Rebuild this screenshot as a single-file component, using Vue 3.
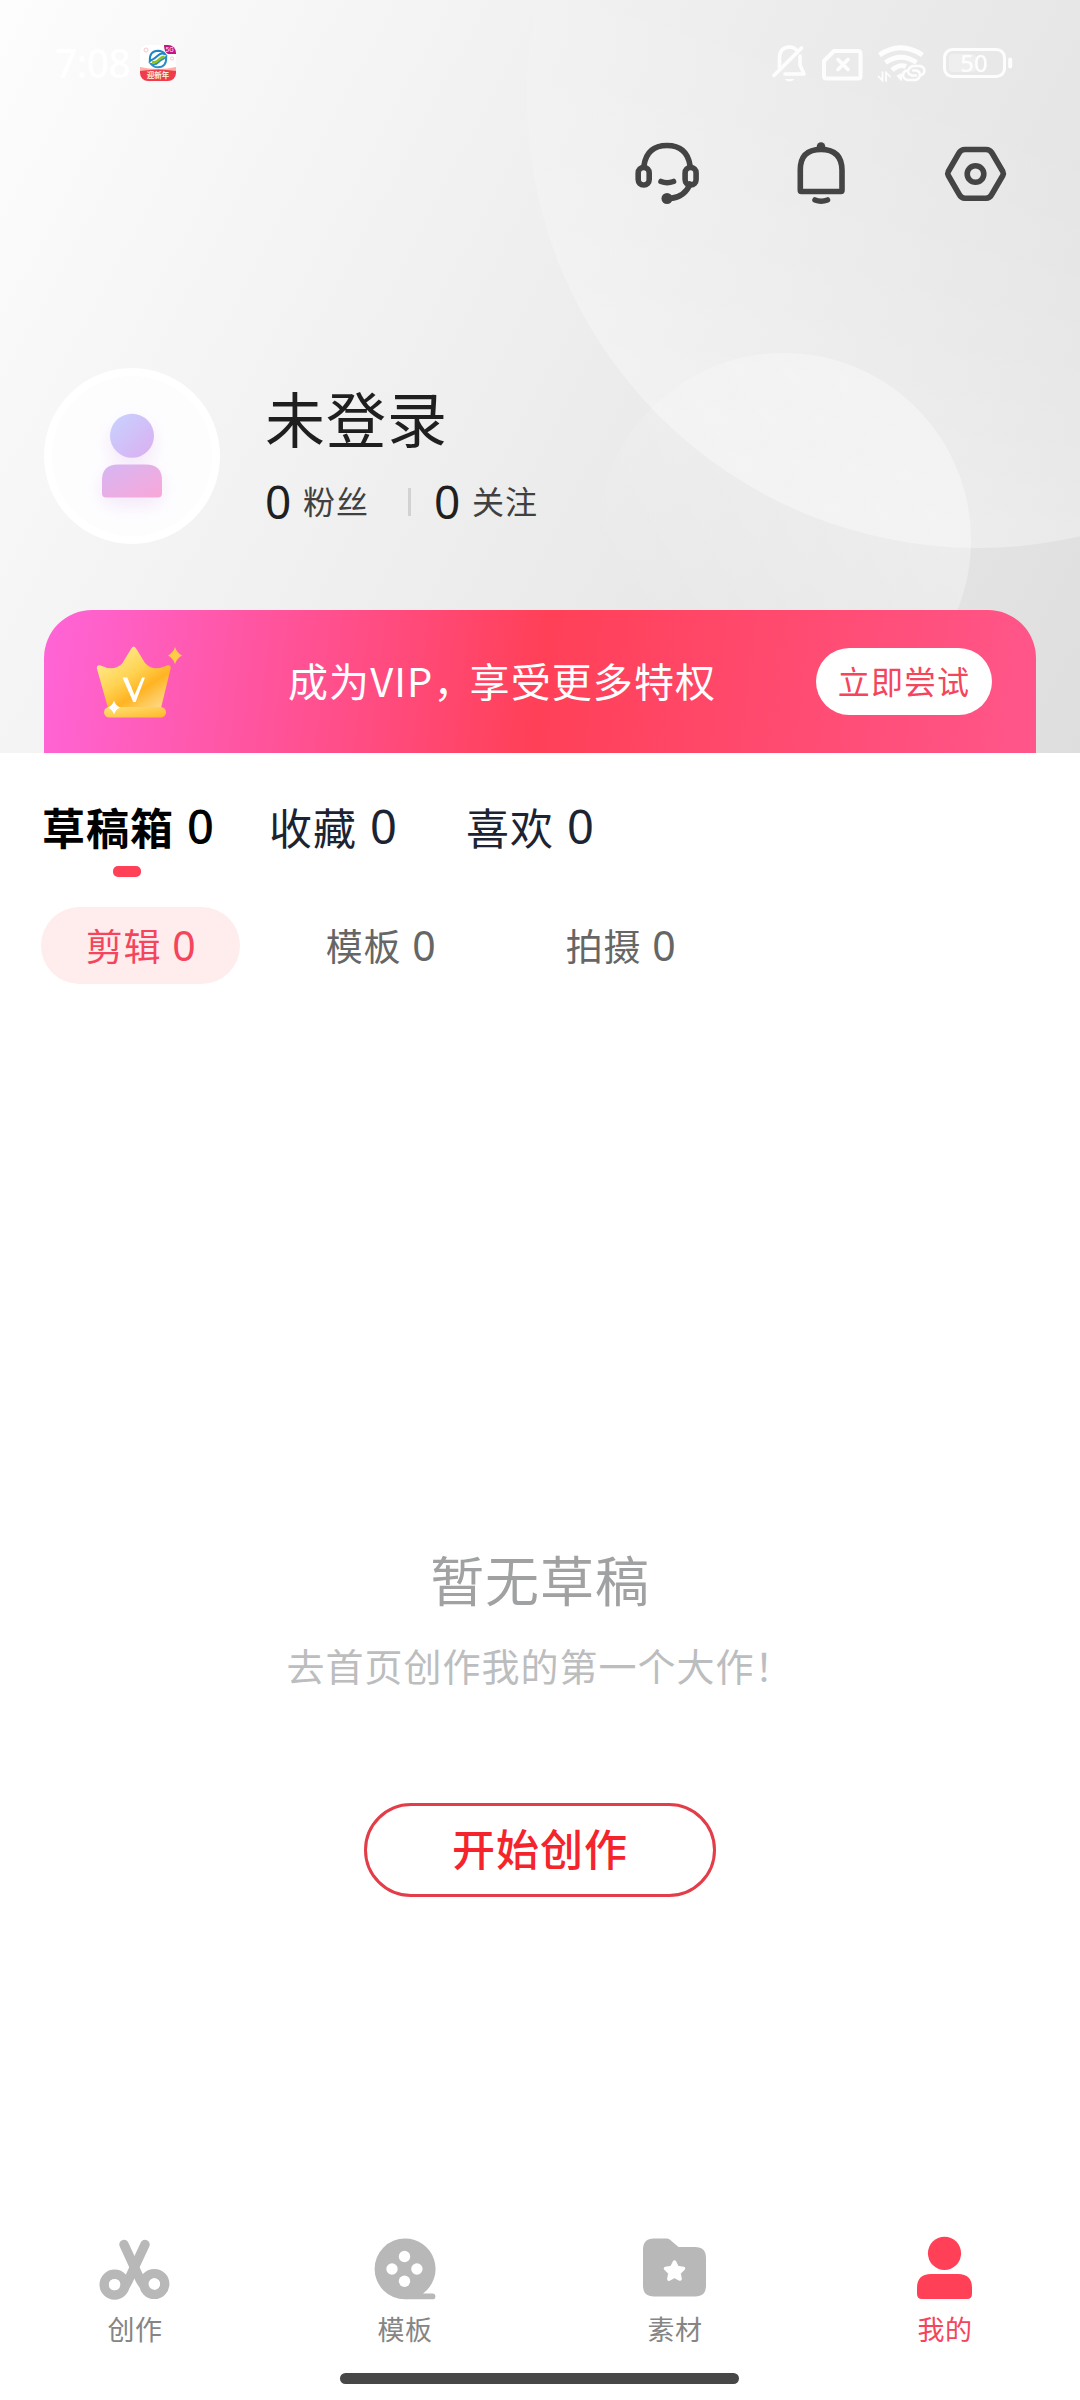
<script setup>
const tabs = [
  { name: '草稿箱', count: 0 },
  { name: '收藏', count: 0 },
  { name: '喜欢', count: 0 },
]
const filters = [
  { name: '剪辑', count: 0 },
  { name: '模板', count: 0 },
  { name: '拍摄', count: 0 },
]
const navItems = [
  { id: 'create', label: '创作' },
  { id: 'template', label: '模板' },
  { id: 'material', label: '素材' },
  { id: 'mine', label: '我的' },
]
</script>

<template>
  <div class="screen">
    <header class="hero">
      <svg class="hero-bg" viewBox="0 0 1080 753" preserveAspectRatio="none">
        <defs>
          <linearGradient id="big" gradientUnits="userSpaceOnUse" x1="690" y1="500" x2="860" y2="60">
            <stop offset="0" stop-color="#fff" stop-opacity=".4" />
            <stop offset=".5" stop-color="#fff" stop-opacity=".18" />
            <stop offset="1" stop-color="#fff" stop-opacity="0" />
          </linearGradient>
          <linearGradient id="small" gradientUnits="userSpaceOnUse" x1="900" y1="420" x2="640" y2="590">
            <stop offset="0" stop-color="#fff" stop-opacity=".36" />
            <stop offset="1" stop-color="#fff" stop-opacity="0.02" />
          </linearGradient>
        </defs>
        <circle cx="978" cy="97" r="451" fill="url(#big)" />
        <circle cx="784" cy="540" r="187" fill="url(#small)" />
      </svg>

      <div class="status">
        <span class="time">7:08</span>
        <svg class="app-badge" viewBox="0 0 36 36">
          <defs><clipPath id="badge"><rect width="36" height="36" rx="8" /></clipPath></defs>
          <g clip-path="url(#badge)">
            <rect width="36" height="36" fill="#fff" />
            <path d="M24 0h12v9h-8q-4-2-4-9z" fill="#c5137f" />
            <text x="25.5" y="7" font-size="6" fill="#fff" font-family="Inter, sans-serif">5G</text>
            <path d="M0 22q18 4 36 0v4H0z" fill="#ffb0a8" />
            <path d="M0 26q18-3 36 0v10H0z" fill="#f13b4c" />
            <g fill="none" stroke-width="2">
              <path d="M9.800 16q-.5-10 8.200-10.300q4.500 0 7 3.300q-4-1.500-7 1.500t-8.200 5.500z" stroke="#1c86c7" />
              <path d="M26.200 12q.5 10-8.200 10.300q-4.500 0-7-3.300q4 1.500 7-1.500t8.200-5.500z" stroke="#2a8fc4" />
              <path d="M12 17q4 1 6.500-2t6-3.500" stroke="#8fc31f" stroke-width="2.400" />
            </g>
            <circle cx="6" cy="5" r="2" fill="none" stroke="#f6c6cd" />
            <circle cx="32" cy="13.500" r="1.600" fill="none" stroke="#f6c6cd" />
            <text x="18" y="33" font-size="7.500" text-anchor="middle" fill="#fff1d6" font-weight="700" font-family="Noto Sans CJK SC, sans-serif">迎新年</text>
          </g>
        </svg>
        <svg class="sys" viewBox="772 44 242 40" fill="none" stroke="#fff" stroke-width="3.600" stroke-linecap="round" stroke-linejoin="round" opacity=".92">
          <path d="M779.500 68.500V58q0-10.500 10-11q4 0 6.500 2.500M800 56v9l4 9h-19" />
          <path d="M774 75.500L801.500 48" />
          <path d="M784.500 79q5 5 10 0z" fill="#fff" stroke="none" />
          <path d="M834 51h24q2.500 0 2.500 2.500v22.500q0 2.500-2.500 2.500h-31.500q-2.500 0-2.500-2.500V61z" stroke-width="4" />
          <path d="M838 59.500l10 10M848 59.500l-10 10" />
          <path d="M879.500 55q21-14.500 43 0" stroke-width="4.800" stroke-linecap="butt" />
          <path d="M885.500 62.500q15.500-10.500 31 0" stroke-width="4.800" stroke-linecap="butt" />
          <path d="M892 70q8-6.500 14-3.500" stroke-width="4.800" stroke-linecap="butt" />
          <path d="M896.500 75.500l5.500-2.500v8q-2.500-1-5.500-5.500z" fill="#fff" stroke="none" />
          <path d="M882.500 72v9M886 72v9M878.500 76.500l4 4M890 76.500l-4-4" stroke-width="1.700" />
          <path d="M916 75.500h-4q-4-1-4-4.500q1-4 5-5h7q4.500 1 4.500 5q-.5 3.500-4.500 4.500M913 70.500h3.500q3.500 1 3.500 4.500q-.5 4-4.500 5h-8q-4.500-1-4.500-5q.5-3.500 3.500-4.500" stroke-width="2.400" />
          <rect x="944.500" y="49.500" width="60" height="27" rx="8" stroke-width="3" />
          <rect x="949" y="54" width="27" height="18" rx="4" fill="#fff" stroke="none" opacity=".3" />
          <path d="M1010.200 59.500v7" stroke-width="4" />
          <text x="974" y="71.500" font-size="24" text-anchor="middle" fill="#fff" stroke="none" font-weight="500" font-family="Noto Sans, sans-serif">50</text>
        </svg>
      </div>

      <div class="tools">
        <svg viewBox="0 0 64 64">
          <path d="M9 24.500Q12 4.500 32 4.500T55 24.500M55 43q-5 13-20 14.500" />
          <rect x="3.200" y="26.500" width="11" height="17.500" rx="5.400" />
          <rect x="50.100" y="26.500" width="11" height="17.500" rx="5.400" />
          <path d="M26 40.500q6 2.500 12.500 0" />
          <circle cx="32" cy="57.500" r="5.500" class="solid" />
        </svg>
        <svg viewBox="0 0 64 64">
          <path d="M11.300 49.300V29q0-20.500 20.700-20.500T53 29v20.300q0 1.200-1 1.200H12.300q-1 0-1-1.200z" />
          <circle cx="32" cy="5.500" r="4.300" class="solid" />
          <path d="M26 59q6 2.500 12.500 0" />
        </svg>
        <svg viewBox="0 0 64 64">
          <path d="M22 8.500h21q4 0 6 3.500l10.800 18.500q1 2 0 4L49 53q-2 4.200-6 4.200H22q-4 0-6-4.200L5.300 34.500q-1-2 0-4L16 12q2-3.500 6-3.500z" />
          <circle cx="32.500" cy="33" r="8.300" />
        </svg>
      </div>

      <div class="profile">
        <div class="avatar">
          <svg viewBox="0 0 160 160">
            <defs>
              <linearGradient id="head" x1="0" y1="0" x2="1" y2="1">
                <stop offset="0" stop-color="#c7d3ff" /><stop offset="1" stop-color="#dbaef0" />
              </linearGradient>
              <linearGradient id="body" x1="0" y1="0" x2="1" y2="1">
                <stop offset="0" stop-color="#d5b6f3" /><stop offset="1" stop-color="#faa7d8" />
              </linearGradient>
              <filter id="glow" x="-60%" y="-60%" width="220%" height="220%"><feGaussianBlur stdDeviation="9" /></filter>
            </defs>
            <g fill="#e2b8f2" opacity=".3" filter="url(#glow)">
              <circle cx="80" cy="68" r="22" /><rect x="50" y="96" width="60" height="33" rx="14" />
            </g>
            <circle cx="80" cy="59.800" r="22" fill="url(#head)" />
            <path d="M50 104.500q0-16 16-16h28q16 0 16 16v13q0 4-4 4H54q-4 0-4-4z" fill="url(#body)" />
          </svg>
        </div>
        <div class="who">
          <div class="name">未登录</div>
          <div class="stats">
            <span class="num">0</span><span class="lab">粉丝</span>
            <i></i>
            <span class="num">0</span><span class="lab">关注</span>
          </div>
        </div>
      </div>

      <div class="vip">
        <svg class="crown" viewBox="0 0 88 74">
          <defs>
            <linearGradient id="gold" x1="0.1" y1="0" x2="0.9" y2="1">
              <stop offset="0" stop-color="#fff19d" /><stop offset=".45" stop-color="#ffd353" />
              <stop offset=".68" stop-color="#ffb322" /><stop offset=".82" stop-color="#ffc753" /><stop offset="1" stop-color="#ffd98c" />
            </linearGradient>
            <linearGradient id="base" x1="0" y1="0" x2="1" y2="1">
              <stop offset="0" stop-color="#ffe277" /><stop offset="1" stop-color="#ffb72b" />
            </linearGradient>
          </defs>
          <path d="M1 23q-1-4.500 3.500-3.500q14 6.500 22-2.500l8.500-14q2.500-5 5.500 0l8.500 14q8 9 22 2.500q4.500-1 3.500 3.500L65 62H12z" fill="url(#gold)" />
          <rect x="8" y="61" width="62" height="10.500" rx="5.200" fill="url(#base)" />
          <path d="M26.500 31.500h4.800L38.500 49l7.500-17.500h3L39.600 56h-2.400z" fill="#fff" />
          <path d="M79 1q2 6 7 8.500q-5 2.500-7 8.500q-2-6-7-8.500q5-2.500 7-8.500z" fill="#ffcc46" />
          <path d="M18 54.500q1.500 5 6 7q-4.500 2-6 7q-1.500-5-6-7q4.500-2 6-7z" fill="#fff" />
        </svg>
        <span class="vip-text">成为VIP<span class="comma">，</span>享受更多特权</span>
        <button class="try">立即尝试</button>
      </div>
    </header>

    <nav class="tabs">
      <div v-for="(t, i) in tabs" :key="t.name" class="tab" :class="{ on: i === 0 }">
        <span>{{ t.name }}</span><span class="num">{{ t.count }}</span>
      </div>
    </nav>
    <div class="filters">
      <div v-for="(f, i) in filters" :key="f.name" class="filter" :class="{ on: i === 0 }">
        <span>{{ f.name }}</span><span class="num">{{ f.count }}</span>
      </div>
    </div>

    <main class="empty">
      <div class="empty-title">暂无草稿</div>
      <div class="empty-sub">去首页创作我的第一个大作！</div>
      <button class="start">开始创作</button>
    </main>

    <footer class="bottom">
      <div class="nav">
        <div v-for="n in navItems" :key="n.id" class="nav-item" :class="{ active: n.id === 'mine' }">
          <svg v-if="n.id === 'create'" viewBox="0 0 72 66">
            <g fill="none" stroke="currentColor" stroke-linecap="round">
              <path d="M25 8.500l16.500 36q4 7 9 10" stroke-width="9.400" />
              <path d="M46 8.500L29.500 44q-4 9-9 11" stroke-width="9.400" />
              <circle cx="15.600" cy="48.600" r="10.400" stroke-width="9.400" />
              <circle cx="55.300" cy="48" r="10.400" stroke-width="9.400" />
            </g>
            <circle cx="15.600" cy="48.600" r="5.700" fill="#fff" /><circle cx="55.300" cy="48" r="5.700" fill="#fff" />
          </svg>
          <svg v-else-if="n.id === 'template'" viewBox="0 0 72 66">
            <path d="M36 2.500a30.400 30.400 0 0 1 18 55h9.500a2.900 2.900 0 0 1 0 5.800H36a30.400 30.400 0 0 1 0-60.800z" fill="currentColor" />
            <g fill="#fff"><circle cx="35.500" cy="20.500" r="5.700" /><circle cx="35.500" cy="45.300" r="5.700" /><circle cx="23" cy="33" r="5.700" /><circle cx="47.900" cy="33" r="5.700" /></g>
          </svg>
          <svg v-else-if="n.id === 'material'" viewBox="0 0 72 66">
            <path d="M4 13.500q0-11 11-11h12.500q2 0 3.500 1.200L39.500 11H56q11 0 11 11v27.500q0 11-11 11H15q-11 0-11-11z" fill="currentColor" />
            <path d="M35.500 26l2.800 5.600 6.200.9-4.500 4.400 1.100 6.200-5.600-2.900-5.600 2.900 1.100-6.200-4.500-4.400 6.200-.9z" fill="#fff" stroke="#fff" stroke-width="3.500" stroke-linejoin="round" />
          </svg>
          <svg v-else viewBox="0 0 72 66">
            <circle cx="35.500" cy="17.300" r="16.600" fill="currentColor" />
            <path d="M8 52q0-14 14-14h27q14 0 14 14v6q0 5-5 5H13q-5 0-5-5z" fill="currentColor" />
          </svg>
          <span>{{ n.label }}</span>
        </div>
      </div>
      <div class="home-bar"></div>
    </footer>
  </div>
</template>

<style>
body { margin: 0; background: #fff; }
</style>

<style scoped>
.screen {
  width: 1080px;
  height: 2400px;
  display: flex;
  flex-direction: column;
  background: #fff;
  overflow: hidden;
  font-family: "Noto Sans CJK SC", sans-serif;
}
.screen *, .screen { box-sizing: border-box; }
svg { display: block; flex: none; }
button { font-family: inherit; padding: 0; white-space: nowrap; }
.num { font-family: "Noto Sans", sans-serif; font-weight: 400; letter-spacing: 0; }
.hero {
  position: relative;
  height: 753px;
  flex: none;
  display: flex;
  flex-direction: column;
  background: linear-gradient(118deg, #fdfdfd 0%, #f5f5f5 25%, #ebebeb 58%, #e5e5e5 80%, #dedede 100%);
}
.hero-bg { position: absolute; inset: 0; width: 1080px; height: 753px; }
.status, .tools, .profile, .vip { position: relative; }
.status {
  height: 120px;
  padding: 6px 66px 0 54px;
  display: flex;
  align-items: center;
}
.time { font: 500 39px/50px "Noto Sans", sans-serif; color: #fff; width: 86px; padding-left: 1px; letter-spacing: -.6px; margin-top: -1px; }
.app-badge { width: 36px; height: 36px; }
.sys { width: 242px; height: 40px; margin: 1px 0 0 auto; }
.tools {
  display: flex;
  justify-content: flex-end;
  gap: 90px;
  height: 88px;
  padding: 21px 73px 0 0;
}
.tools svg { width: 64px; height: 64px; fill: none; stroke: #444; stroke-width: 5.6; stroke-linecap: round; stroke-linejoin: round; }
.tools .solid { fill: #444; stroke: none; }
.profile { display: flex; margin-top: 160px; padding-left: 44px; height: 176px; }
.avatar { width: 176px; height: 176px; border-radius: 50%; border: 8px solid #fff; background: #fdfdfe; overflow: hidden; }
.avatar svg { width: 160px; height: 160px; }
.who { margin-left: 45px; padding-top: 12px; }
.name { font-size: 60px; line-height: 74px; letter-spacing: 1px; color: #1f1f1f; }
.stats { display: flex; align-items: center; height: 50px; margin-top: 22px; }
.stats .num { font-size: 46px; line-height: 50px; color: #1f1f1f; width: 38px; }
.stats .lab { font-size: 32px; line-height: 46px; letter-spacing: 1px; color: #404040; width: 67px; margin-top: -2px; }
.stats i { width: 3px; height: 28px; background: #d2d2d2; margin: 2px 23px 0 38px; }
.vip {
  margin: 67px 44px 0;
  height: 143px;
  border-radius: 48px 48px 0 0;
  background: linear-gradient(97deg, #ff65d8 0%, #ff4057 50%, #ff568b 100%);
  display: flex;
  align-items: center;
}
.vip { margin-top: 66px; }
.crown { width: 88px; height: 74px; margin: 2px 0 0 52px; }
.vip-text { margin: -4px 0 0 104px; width: 528px; font-size: 40px; line-height: 54px; letter-spacing: 1.1px; color: #fff; white-space: nowrap; }
.comma { letter-spacing: -4px; }
.try { width: 176px; height: 67px; border: 0; border-radius: 34px; background: #fff; color: #f5455c; font-size: 32px; line-height: 60px; letter-spacing: 1.1px; padding-bottom: 3px; }
.tabs { display: flex; height: 154px; padding: 41px 0 0 42px; flex: none; }
.tab { position: relative; display: flex; align-items: center; height: 64px; font-size: 43px; line-height: 60px; letter-spacing: 1px; color: #1c2433; margin-right: 69px; }
.tab .num { font-size: 47px; line-height: 60px; margin-left: 13px; width: 27px; }
.tab.on { font-weight: 600; color: #000; margin-right: 55px; }
.tab.on .num { font-weight: 500; }
.tab.on::after { content: ""; position: absolute; left: 71px; top: 72px; width: 28px; height: 11px; border-radius: 5px; background: #ff4057; }
.filters { display: flex; gap: 41px; padding-left: 41px; flex: none; }
.filter { width: 199px; height: 77px; border-radius: 39px; display: flex; align-items: center; justify-content: center; font-size: 37px; line-height: 54px; letter-spacing: .8px; color: #666; padding: 0 0 2px 1px; }
.filter .num { font-size: 41px; line-height: 54px; margin-left: 11px; width: 24px; }
.filter.on { background: #ffedee; color: #f5455c; }
.empty { flex: 1; display: flex; flex-direction: column; align-items: center; padding-top: 558px; }
.empty-title { font-size: 54px; line-height: 74px; letter-spacing: .9px; color: #a0a1a2; }
.empty-sub { margin-top: 22px; font-size: 38px; line-height: 54px; letter-spacing: 1px; color: #bcbdbe; }
.start { margin-top: 111px; width: 352px; height: 94px; border: 3px solid #e23d48; border-radius: 47px; background: #fff; color: #f5242c; font-size: 43px; font-weight: 500; line-height: 80px; letter-spacing: 1px; padding: 0 0 6px; }
.bottom { height: 165px; flex: none; display: flex; flex-direction: column; align-items: center; }
.nav { display: flex; width: 1080px; height: 138px; padding-top: 1px; }
.nav-item { width: 270px; display: flex; flex-direction: column; align-items: center; color: #b8b8b8; }
.nav-item svg { width: 72px; height: 66px; }
.nav-item span { font-size: 27px; line-height: 40px; margin-top: 7px; letter-spacing: .5px; color: #858585; }
.nav-item.active { color: #ff4057; }
.nav-item.active span { color: #f5455c; }
.home-bar { width: 399px; height: 11px; border-radius: 6px; background: #474747; margin-right: 1px; }
</style>
